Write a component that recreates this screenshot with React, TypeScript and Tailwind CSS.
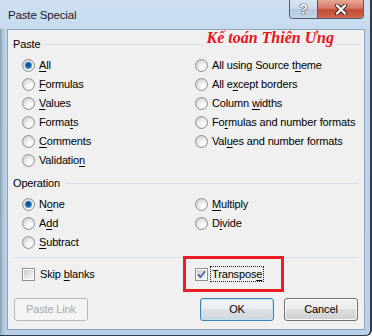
import type { ReactNode } from "react";

const groupLine = "h-px bg-[#d5dfe5]";

function Key({ label, at }: { label: string; at: number }) {
  return (
    <span className="whitespace-nowrap">
      {label.slice(0, at)}
      <span className="underline decoration-1 underline-offset-2">{label[at]}</span>
      {label.slice(at + 1)}
    </span>
  );
}

function Radio({ checked = false }: { checked?: boolean }) {
  return (
    <span className="flex h-[13px] w-[13px] shrink-0 items-center justify-center rounded-full border border-[#8c8f94] bg-[radial-gradient(circle_at_65%_70%,#ffffff_0%,#f2f2f2_35%,#d4d6d9_75%,#c2c5c9_100%)]">
      {checked ? (
        <span className="h-[7px] w-[7px] rounded-full bg-[radial-gradient(circle_at_45%_40%,#0b3d75_0%,#1766ad_40%,#5fb0e8_80%,#a6d8f6_100%)]" />
      ) : null}
    </span>
  );
}

function Check({ checked = false }: { checked?: boolean }) {
  return (
    <span className="flex h-[13px] w-[13px] shrink-0 items-center justify-center border border-[#8e8f8f] bg-white p-px">
      <span className="relative h-full w-full bg-[linear-gradient(135deg,#c9ccd1_0%,#e4e6e8_60%,#f4f4f4_100%)]">
        {checked ? (
          <svg viewBox="0 0 9 9" className="absolute inset-0 h-[9px] w-[9px]">
            <path d="M1 4.3 L3.5 7 L8 1.2" fill="none" stroke="#4a5c9c" strokeWidth="1.7" />
          </svg>
        ) : null}
      </span>
    </span>
  );
}

function Option({ label, at, checked }: { label: string; at: number; checked?: boolean }) {
  return (
    <div className="flex h-[19px] items-center gap-[4px]">
      <Radio checked={checked} />
      <Key label={label} at={at} />
    </div>
  );
}

function Header({ children }: { children: ReactNode }) {
  return <div className="flex h-[14px] items-center pl-[5px] pr-[5px]">{children}</div>;
}

function Button({ children, kind = "normal" }: { children: ReactNode; kind?: "normal" | "default" | "disabled" }) {
  const look =
    kind === "disabled"
      ? "border-[#b5b9bc] bg-[#f4f4f4] text-[#a7a7a7]"
      : kind === "default"
        ? "border-[#3c7fb1] bg-[linear-gradient(180deg,#f2f4f6_0%,#eaeef2_49%,#dce2e8_50%,#d0d6dc_100%)] shadow-[inset_0_0_0_1px_#bde6f8]"
        : "border-[#707070] bg-[linear-gradient(180deg,#f2f2f2_0%,#ebebeb_49%,#dddddd_50%,#cfcfcf_100%)] shadow-[inset_0_0_0_1px_#fcfcfc]";
  return (
    <div className={`flex h-[23px] w-[74px] items-center justify-center rounded-[3px] border ${look}`}>
      {children}
    </div>
  );
}

export default function App() {
  return (
    <div className="h-[336px] w-[372px] overflow-hidden rounded-br-[6px] border-r-2 border-b border-[#2f3d4d] bg-[linear-gradient(90deg,#7f9aa3_0px,#a6bfd6_2px,transparent_6px),linear-gradient(180deg,#cadcf0_0%,#c2d7ee_30px,#b9d0e9_100%)] font-['Liberation_Sans',Arial,sans-serif] text-[11px] tracking-[-0.15px] text-black">
      <div className="flex h-[29px] items-start bg-[linear-gradient(180deg,#cfe0f2_0%,#c6daef_100%)]">
        <span className="ml-[8px] mt-[8px] text-[11.5px] leading-[14px] text-[#1a1a1a]">Paste Special</span>
        <div className="ml-auto mr-[6px] flex h-[19px] overflow-hidden rounded-b-[4px] border border-t-0 border-[#4e5d72]">
          <div className="flex w-[28px] items-center justify-center border-r border-[#4e5d72] bg-[linear-gradient(180deg,#dbe5f1_0%,#cbd8e8_50%,#b6c7dc_51%,#c4d4e6_100%)]">
            <span className="text-[14px] font-bold leading-none text-white [text-shadow:0_0_1px_#2a3340,0_0_1px_#2a3340,0_0_1px_#2a3340]">?</span>
          </div>
          <div className="flex w-[45px] items-center justify-center bg-[linear-gradient(180deg,#e8a796_0%,#d47a66_45%,#c24b36_55%,#d0654c_100%)]">
            <svg viewBox="0 0 14 11" className="h-[11px] w-[14px]">
              <path d="M3 1.5 L11 9.5 M11 1.5 L3 9.5" stroke="#3d2320" strokeWidth="4.2" strokeLinecap="round" />
              <path d="M3 1.5 L11 9.5 M11 1.5 L3 9.5" stroke="#ffffff" strokeWidth="2.4" strokeLinecap="round" />
            </svg>
          </div>
        </div>
      </div>

      <div className="ml-[7px] flex h-[301px] w-[358px] flex-col border border-[#8fa3b8] bg-[#f0f0f0]">
        <div className="mt-[7px]">
          <Header>
            <span>Paste</span>
            <span className={`ml-[4px] flex-1 ${groupLine}`} />
            <span className="-translate-y-[6px] px-[2px] font-['Liberation_Serif',serif] text-[16px] leading-none font-bold tracking-normal text-[#e8141c] italic">
              Kế toán Thiên Ưng
            </span>
            <span className={`w-[23px] ${groupLine}`} />
          </Header>
        </div>

        <div className="mt-[5px] grid grid-cols-[173px_1fr] pl-[14px]">
          <div>
            <Option label="All" at={0} checked />
            <Option label="Formulas" at={0} />
            <Option label="Values" at={0} />
            <Option label="Formats" at={5} />
            <Option label="Comments" at={0} />
            <Option label="Validation" at={9} />
          </div>
          <div>
            <Option label="All using Source theme" at={18} />
            <Option label="All except borders" at={5} />
            <Option label="Column widths" at={7} />
            <Option label="Formulas and number formats" at={2} />
            <Option label="Values and number formats" at={3} />
          </div>
        </div>

        <div className="mt-[6px]">
          <Header>
            <span>Operation</span>
            <span className={`ml-[5px] flex-1 ${groupLine}`} />
          </Header>
        </div>

        <div className="mt-[5px] grid grid-cols-[173px_1fr] pl-[14px]">
          <div>
            <Option label="None" at={1} checked />
            <Option label="Add" at={1} />
            <Option label="Subtract" at={0} />
          </div>
          <div>
            <Option label="Multiply" at={0} />
            <Option label="Divide" at={1} />
          </div>
        </div>

        <div className={`mx-[5px] mt-[5px] ${groupLine}`} />

        <div className="mt-[6px] grid h-[20px] grid-cols-[173px_1fr] items-center pl-[14px]">
          <div className="flex items-center gap-[5px]">
            <Check />
            <Key label="Skip blanks" at={5} />
          </div>
          <div className="relative flex items-center gap-[2px]">
            <Check checked />
            <span className="border border-dotted border-[#222] px-px leading-[14px]">
              <Key label="Transpose" at={8} />
            </span>
            <span className="pointer-events-none absolute top-[-10px] left-[-12px] h-[36px] w-[101px] border-[3px] border-[#ec1c24]" />
          </div>
        </div>

        <div className="mt-[14px] flex px-[6px]">
          <Button kind="disabled">Paste Link</Button>
          <div className="ml-auto flex gap-[10px]">
            <Button kind="default">OK</Button>
            <Button>Cancel</Button>
          </div>
        </div>
      </div>
    </div>
  );
}
